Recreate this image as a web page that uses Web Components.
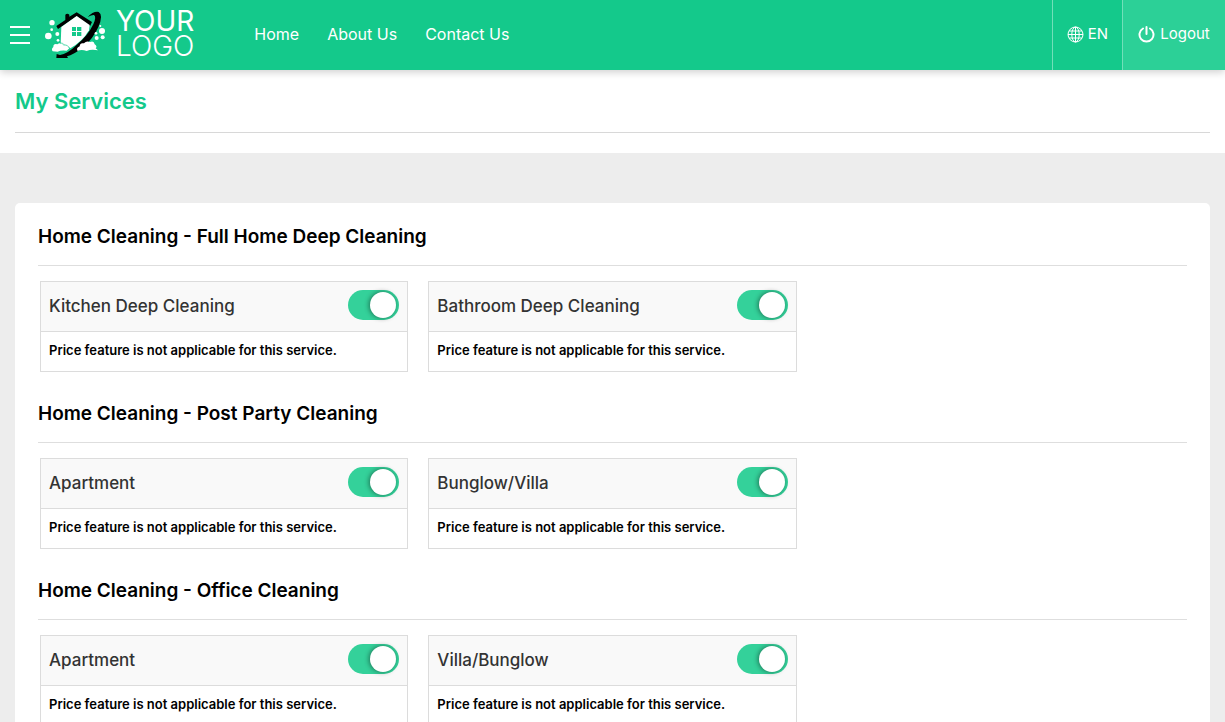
<!DOCTYPE html>
<html lang="en">
<head>
<meta charset="utf-8">
<meta name="viewport" content="width=device-width, initial-scale=1">
<title>My Services</title>
<style>
  body { margin: 0; background: #ededed; font-family: Inter, "Open Sans", sans-serif; color: #000; }
</style>
</head>
<body>
<app-header>
  <nav-link href="#home">Home</nav-link>
  <nav-link href="#about">About Us</nav-link>
  <nav-link href="#contact">Contact Us</nav-link>
</app-header>
<page-title>My Services</page-title>
<services-panel>
  <service-group heading="Home Cleaning - Full Home Deep Cleaning">
    <service-card name="Kitchen Deep Cleaning">Price feature is not applicable for this service.</service-card>
    <service-card name="Bathroom Deep Cleaning">Price feature is not applicable for this service.</service-card>
  </service-group>
  <service-group heading="Home Cleaning - Post Party Cleaning">
    <service-card name="Apartment">Price feature is not applicable for this service.</service-card>
    <service-card name="Bunglow/Villa">Price feature is not applicable for this service.</service-card>
  </service-group>
  <service-group heading="Home Cleaning - Office Cleaning">
    <service-card name="Apartment">Price feature is not applicable for this service.</service-card>
    <service-card name="Villa/Bunglow">Price feature is not applicable for this service.</service-card>
  </service-group>
</services-panel>

<script>
class BaseElement extends HTMLElement {
  constructor() {
    super();
    const t = document.createElement('template');
    t.innerHTML = this.constructor.markup;
    this.attachShadow({ mode: 'open' }).append(t.content.cloneNode(true));
  }
}

customElements.define('nav-link', class extends BaseElement {
  static markup = `
    <style>
      :host { display: block; }
      a { color: #fff; text-decoration: none; font-size: 16px; line-height: 24px; white-space: nowrap; }
    </style>
    <a><slot></slot></a>`;
  connectedCallback() {
    this.shadowRoot.querySelector('a').href = this.getAttribute('href');
  }
});

customElements.define('brand-logo', class extends BaseElement {
  static markup = `
    <style>
      :host { display: block; }
      a { display: flex; align-items: center; gap: 6px; color: #fff; text-decoration: none; }
      svg { display: block; width: 70px; height: 60px; }
      .words { display: grid; padding-bottom: 2px; font-size: 28px; line-height: 25px; }
      .top { font-weight: 400; }
      .bottom { font-weight: 300; }
    </style>
    <a href="#home">
      <svg viewBox="0 0 210 180" aria-hidden="true">
        <path fill="#000" d="M49 63L76 45V29Q82 23 88 29V35L110 22L156 51L150 64L110 34L54 72Z"/>
        <path fill="#000" d="M143 36Q160 18 176 21Q191 30 175 66Q160 100 130 126Q100 150 81 154L84 159H49L50 147L60 150Q83 147 112 118Q144 91 160 58Q170 36 162 30Q156 29 143 36Z"/>
        <path fill="#fff" d="M64 66L110 33L149 60L147 76Q128 109 91 130L62 116Z"/>
        <path fill="#fff" d="M38 139Q33 132 40 126Q40 115 52 118Q62 111 70 121Q81 120 88 130L80 137Q62 135 53 140Z"/>
        <path fill="#fff" d="M113 138Q107 129 119 124Q120 112 132 115Q139 106 150 111Q162 106 164 118Q173 124 167 130L174 136Q154 131 140 138Q124 132 113 138Z"/>
        <path fill="none" stroke="#14c98b" stroke-width="2" d="M60 114Q68 113 72 119Q82 118 91 131"/>
        <path fill="#14c98b" d="M96 66h12v12H96zM111 66h13v12h-13zM96 81h12v12H96zM111 81h13v12h-13z"/>
        <g fill="#fff">
          <circle cx="36" cy="53" r="8"/><circle cx="25" cy="93" r="10"/>
          <circle cx="52" cy="87" r="6"/><circle cx="35" cy="74" r="4"/>
          <circle cx="54" cy="106" r="4"/><circle cx="186" cy="78" r="9"/>
          <circle cx="188" cy="97" r="6"/><circle cx="170" cy="99" r="6"/>
          <circle cx="168" cy="85" r="4"/><circle cx="181" cy="63" r="3"/>
        </g>
      </svg>
      <span class="words"><span class="top">YOUR</span><span class="bottom">LOGO</span></span>
    </a>`;
});

customElements.define('app-header', class extends BaseElement {
  static markup = `
    <style>
      :host { display: flex; height: 70px; background: #14c98b; position: relative; box-shadow: 0 2px 8px rgba(0,0,0,.2); }
      button { font: inherit; color: inherit; border: 0; margin: 0; cursor: pointer; background: none; }
      .menu { display: grid; align-content: center; gap: 6px; width: 40px; padding: 0 10px; }
      .menu span { height: 2px; background: #fff; }
      brand-logo { align-self: center; }
      nav { display: flex; align-items: center; gap: 28px; margin-left: 60px; padding-bottom: 2px; }
      .tools { display: flex; margin-left: auto; color: #fff; font-size: 15px; line-height: 24px; }
      .tools button { display: flex; align-items: center; justify-content: center; gap: 4px; padding: 0 0 2px; border-left: 1px solid #72dfb9; }
      .lang { width: 70px; }
      .tools .out { width: 103px; gap: 5px; background: #2cd097; }
      svg { display: block; width: 17px; height: 17px; fill: none; stroke: #fff; }
    </style>
    <button class="menu" type="button" aria-label="Menu"><span></span><span></span><span></span></button>
    <brand-logo></brand-logo>
    <nav><slot></slot></nav>
    <div class="tools">
      <button class="lang" type="button">
        <svg viewBox="0 0 17 17" aria-hidden="true"><circle cx="8.500" cy="8.500" r="7.500"/><ellipse cx="8.500" cy="8.500" rx="3.700" ry="7.500"/><path d="M8.500 1v15M1 8.500h15M2 5h13M2 12h13"/></svg>
        <span>EN</span>
      </button>
      <button class="out" type="button">
        <svg viewBox="0 0 17 17" stroke-width="2" stroke-linecap="round" aria-hidden="true"><path d="M5 2.500a7 7 0 1 0 7 0M8.500 1v7"/></svg>
        <span>Logout</span>
      </button>
    </div>`;
});

customElements.define('page-title', class extends BaseElement {
  static markup = `
    <style>
      :host { display: block; background: #fff; padding: 15px 15px 20px; }
      h1 { margin: 0; padding-bottom: 15px; border-bottom: 1px solid #d8d8d8; color: #14c98b; font-size: 22px; line-height: 32px; font-weight: 600; }
    </style>
    <h1><slot></slot></h1>`;
});

customElements.define('services-panel', class extends BaseElement {
  static markup = `
    <style>
      :host { display: grid; gap: 28px; margin: 50px 15px; padding: 20px 23px; background: #fff; border-radius: 5px; }
    </style>
    <slot></slot>`;
});

customElements.define('service-group', class extends BaseElement {
  static markup = `
    <style>
      :host { display: block; }
      h2 { margin: 0 0 15px; padding-bottom: 14px; border-bottom: 1px solid #dedede; font-size: 19px; line-height: 28px; font-weight: 600; }
      .cards { display: grid; grid-template-columns: repeat(3, 1fr); gap: 20px; padding: 0 2px; }
    </style>
    <section>
      <h2></h2>
      <div class="cards"><slot></slot></div>
    </section>`;
  connectedCallback() {
    this.shadowRoot.querySelector('h2').textContent = this.getAttribute('heading');
  }
});

customElements.define('service-card', class extends BaseElement {
  static markup = `
    <style>
      :host { display: block; border: 1px solid #dcdcdc; background: #fff; }
      .head { display: flex; align-items: center; justify-content: space-between; padding: 8px 8px 11px; background: #f9f9f9; border-bottom: 1px solid #dcdcdc; }
      label { color: #333; font-size: 17px; line-height: 24px; font-weight: 500; padding-top: 2px; }
      input { appearance: none; box-sizing: border-box; width: 51px; height: 30px; margin: 0; padding: 2px 3px; border-radius: 15px; background: #bbb; display: flex; cursor: pointer; }
      input::before { content: ""; width: 26px; height: 26px; border-radius: 50%; background: #fff; box-shadow: -1px 0 5px rgba(0,0,0,.45); }
      input:checked { background: #34d19a; justify-content: flex-end; }
      p { margin: 0; padding: 8px 8px 11px; font-size: 13px; line-height: 20px; font-weight: 600; }
    </style>
    <div class="head">
      <label for="toggle"></label>
      <input id="toggle" type="checkbox" checked>
    </div>
    <p><slot></slot></p>`;
  connectedCallback() {
    this.shadowRoot.querySelector('label').textContent = this.getAttribute('name');
  }
});
</script>
</body>
</html>
